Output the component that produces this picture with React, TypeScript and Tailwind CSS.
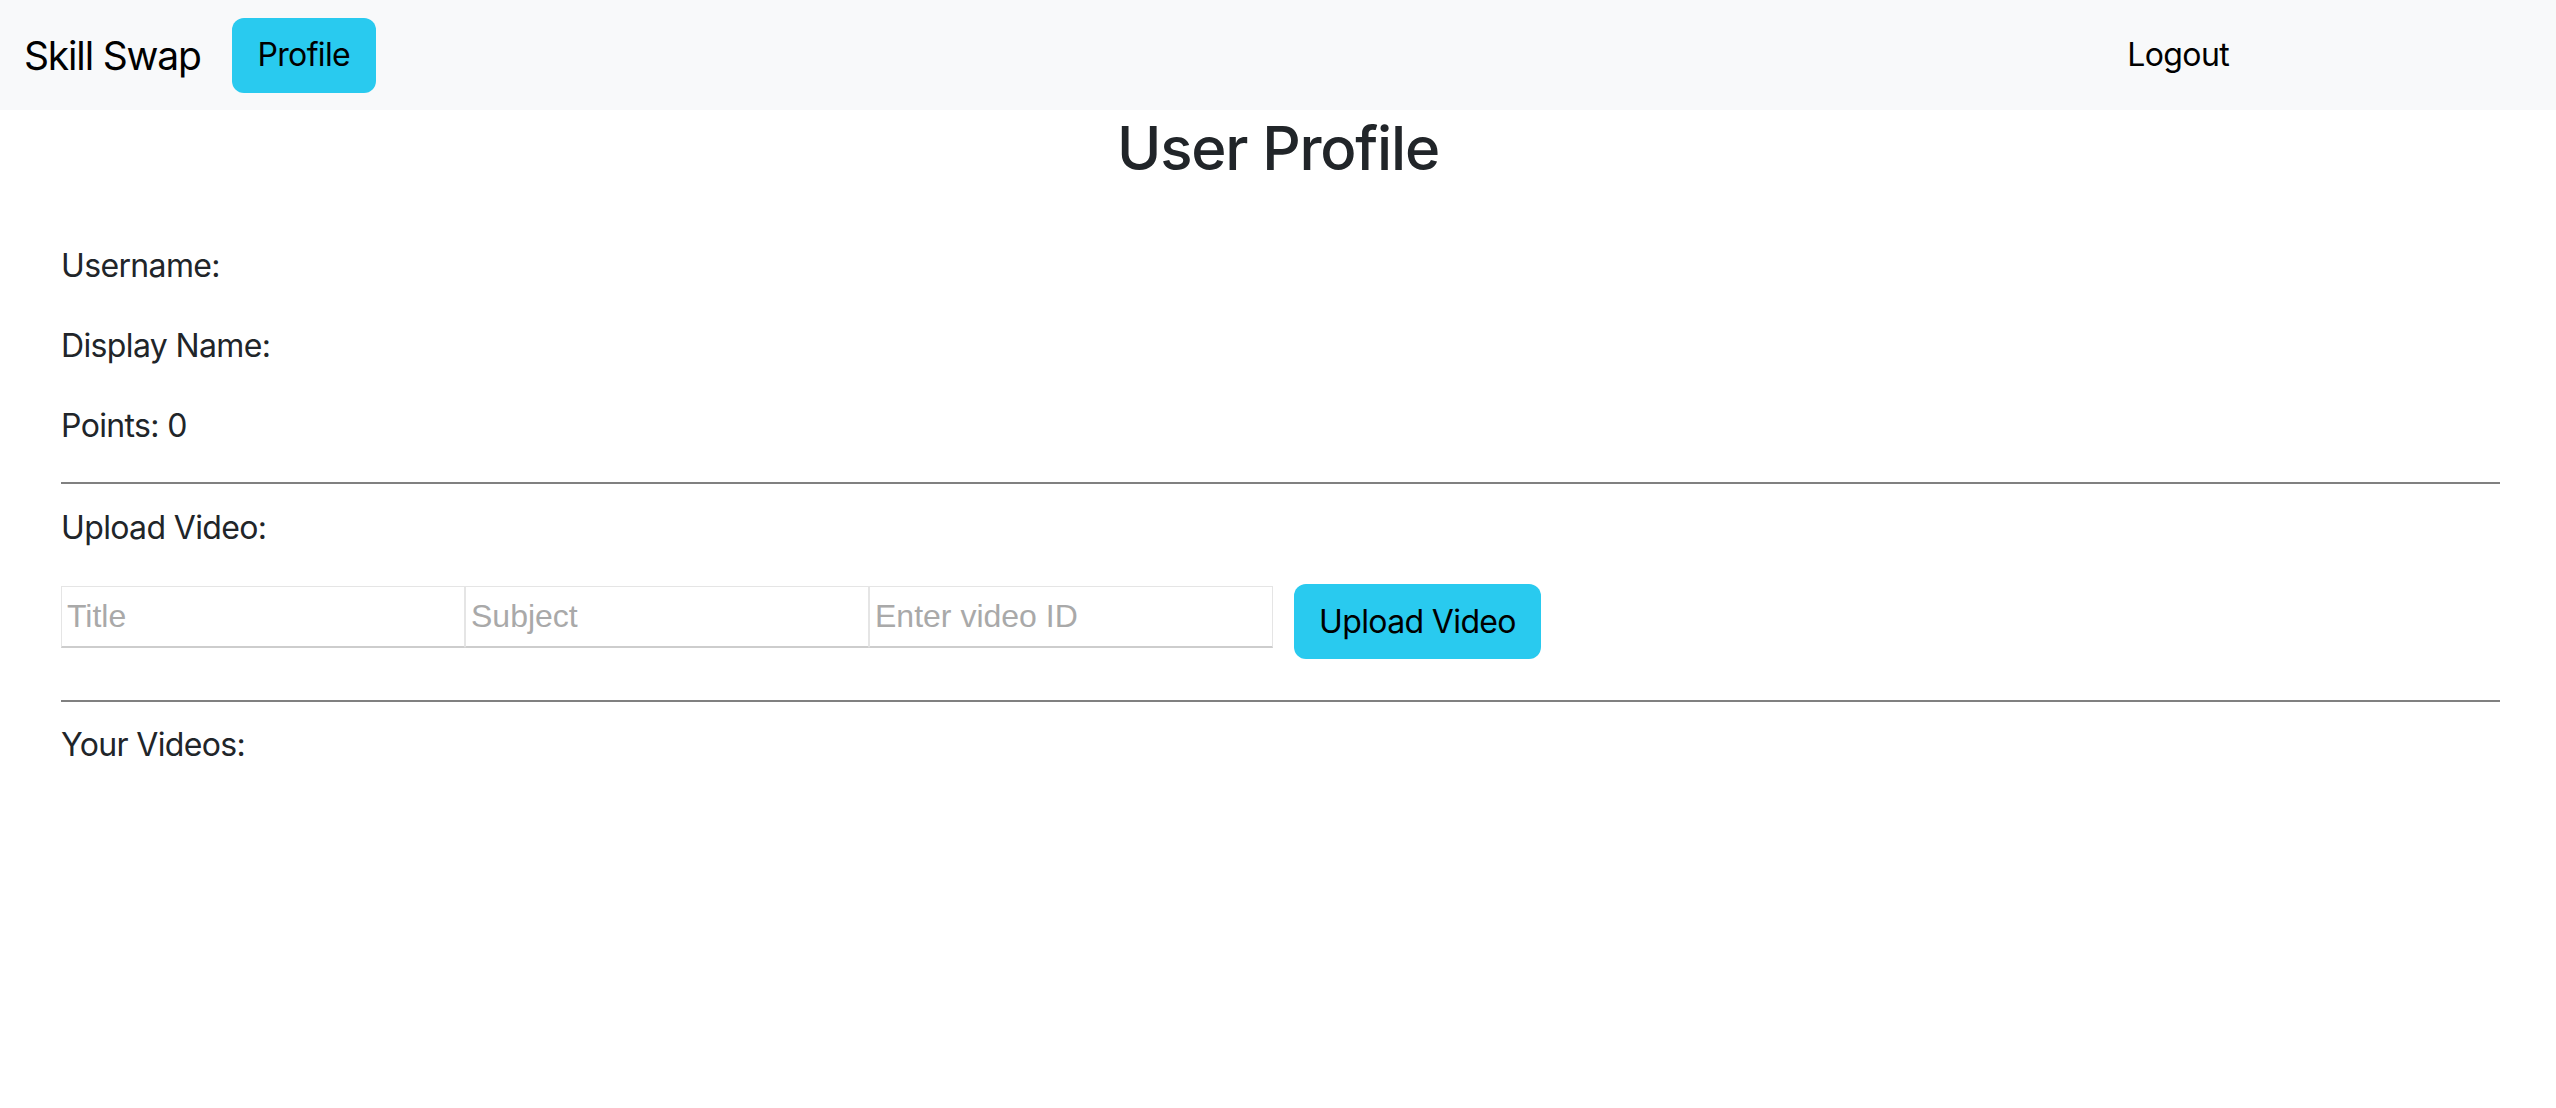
import React from "react";

export default function App() {
  const sans = { fontFamily: 'Inter, "Noto Sans", sans-serif' };
  return (
    <div className="min-h-[1108px] bg-white text-[#212529]" style={sans}>
      <nav className="flex h-[110px] items-center bg-[#f8f9fa] text-black">
        <span className="ml-[24px] text-[39px] leading-none tracking-[-0.03em]">Skill Swap</span>
        <button className="ml-[31px] flex h-[75px] w-[144px] items-center justify-center rounded-[12px] bg-[#29caef] text-[32px] tracking-[-0.02em] text-black">
          Profile
        </button>
        <span className="ml-auto mr-[327px] text-[32px] leading-none tracking-[-0.02em]">Logout</span>
      </nav>
      <h1 className="text-center text-[60px] font-medium leading-[76px] tracking-[-0.02em]">User Profile</h1>
      <div className="ml-[61px] mr-[56px] mt-[56px] text-[32px] leading-[48px] tracking-[-0.02em]">
        <p className="mb-[32px]">Username:</p>
        <p className="mb-[32px]">Display Name:</p>
        <p className="mb-[32px]">Points: 0</p>
        <div className="h-[2px] bg-[#808080]" />
        <p className="mt-[20px]">Upload Video:</p>
        <div className="mt-[32px] flex items-start">
          {["Title", "Subject", "Enter video ID"].map((p) => (
            <input
              key={p}
              placeholder={p}
              className="mt-[2px] h-[62px] w-[404px] border border-[#e5e5e5] border-b-2 border-b-[#cdcdcd] bg-white px-[5px] text-[32px] tracking-normal placeholder:text-[#a9a9a9] outline-none"
              style={{ fontFamily: '"Liberation Sans", Arial, sans-serif' }}
            />
          ))}
          <button className="ml-[21px] flex h-[75px] w-[247px] items-center justify-center rounded-[12px] bg-[#29caef] text-[32px] text-black">
            Upload Video
          </button>
        </div>
        <div className="mt-[41px] h-[2px] bg-[#808080]" />
        <p className="mt-[19px]">Your Videos:</p>
      </div>
    </div>
  );
}
